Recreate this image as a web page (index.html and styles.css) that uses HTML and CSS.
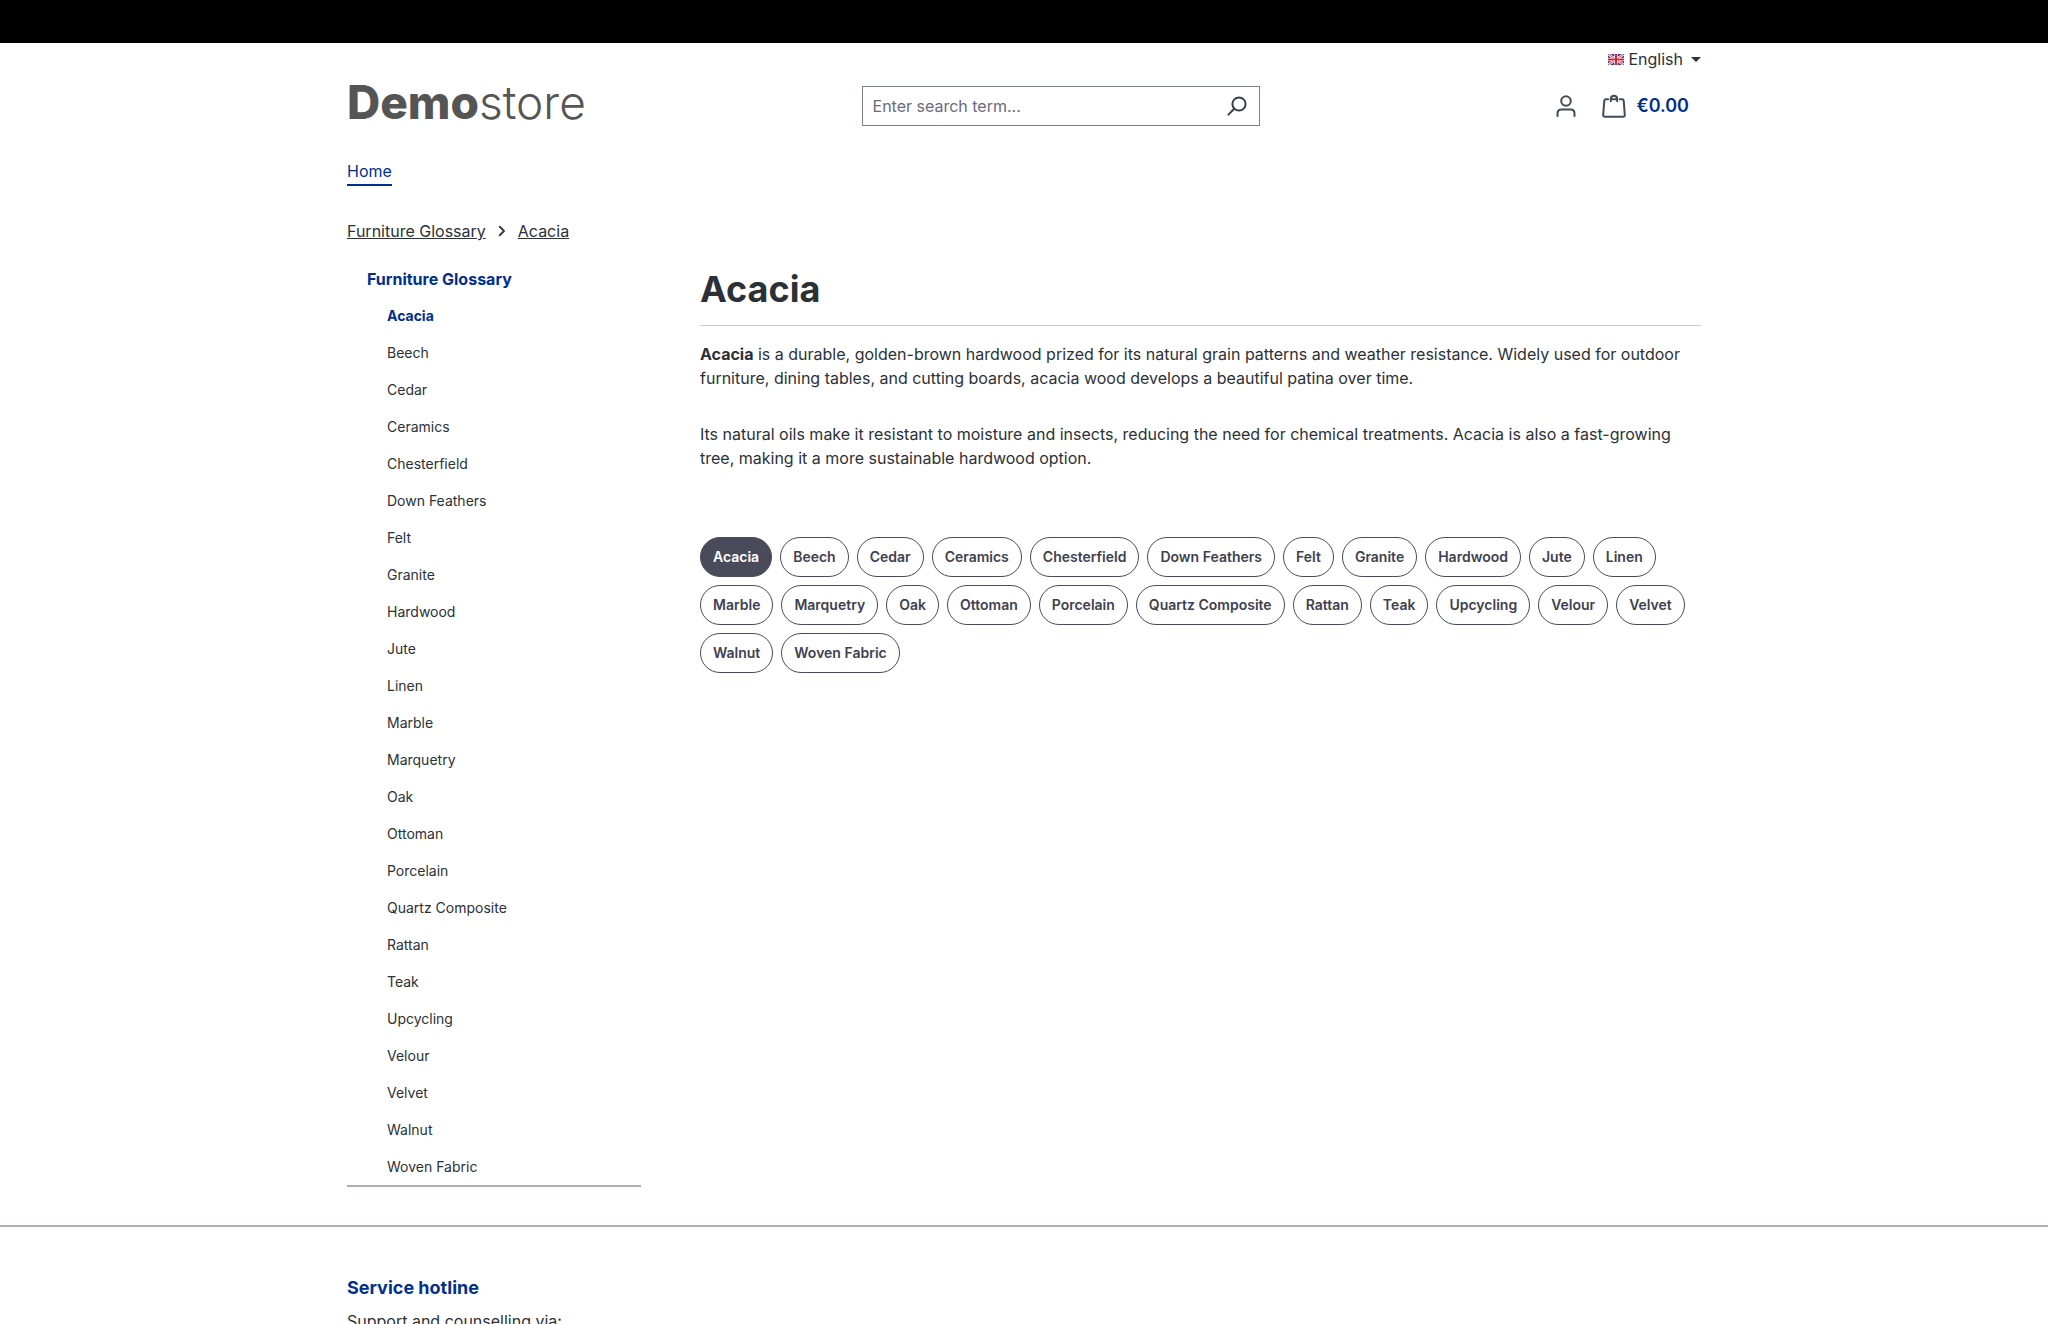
FILE: index.html
```html
<!DOCTYPE html>
<html lang="en">
<head>
    <meta charset="UTF-8">
    <meta name="viewport" content="width=device-width, initial-scale=1.0">
    <title>Acacia | Demostore</title>
    <link rel="stylesheet" href="styles.css">
</head>
<body>
    <div class="admin-bar"></div>
    <header class="container">
        <div class="top-bar">
            <button type="button" class="language-btn">
                <svg class="flag" viewBox="0 0 16 11" aria-hidden="true">
                    <rect width="16" height="11" fill="#2b3c7e"/>
                    <path d="M0 0l16 11M16 0L0 11" stroke="#fff" stroke-width="2.4"/>
                    <path d="M0 0l16 11M16 0L0 11" stroke="#d8213b" stroke-width="0.9"/>
                    <path d="M8 0v11M0 5.5h16" stroke="#fff" stroke-width="3.4"/>
                    <path d="M8 0v11M0 5.5h16" stroke="#d8213b" stroke-width="2"/>
                </svg>
                <span>English</span>
                <span class="caret"></span>
            </button>
        </div>
        <div class="header-row">
            <a href="#" class="logo"><b>Demo</b>store</a>
            <form class="search" role="search">
                <input type="search" class="search-input" placeholder="Enter search term..." aria-label="Enter search term">
                <button type="submit" class="search-btn" aria-label="Search">
                    <svg class="search-icon" viewBox="0 0 20 20" aria-hidden="true">
                        <circle cx="12" cy="8" r="6.6"/>
                        <path d="M7.2 12.8L1.4 18.6"/>
                    </svg>
                </button>
            </form>
            <div class="header-actions">
                <button type="button" class="icon-btn" aria-label="Your account">
                    <svg class="icon" viewBox="0 0 24 24" aria-hidden="true">
                        <circle cx="12" cy="7" r="4.8"/>
                        <path d="M3.5 22v-2.6c0-2.4 1.6-3.9 4-3.9h9c2.4 0 4 1.5 4 3.9V22"/>
                    </svg>
                </button>
                <a href="#" class="cart">
                    <svg class="icon" viewBox="0 0 24 24" aria-hidden="true">
                        <path d="M6.2 5.3H3.9c-.9 0-1.5.5-1.6 1.4L1.2 20.9c-.1 1.1.6 1.8 1.6 1.8h18.4c1 0 1.700-.7 1.600-1.800L21.700 6.700c-.1-.9-.7-1.400-1.600-1.400h-2.300M10.600 5.300h2.800M8.800 7.300V5.200c0-2 1.200-3.500 3.200-3.500s3.200 1.500 3.200 3.500v2.100"/>
                    </svg>
                    <span>€0.00</span>
                </a>
            </div>
        </div>
        <nav class="main-nav">
            <a href="#" class="active">Home</a>
        </nav>
    </header>

    <main class="container">
        <nav class="breadcrumb" aria-label="Breadcrumb">
            <a href="#">Furniture Glossary</a>
            <svg class="chevron" viewBox="0 0 8 12" aria-hidden="true"><path d="M1.800 1.800L6 6l-4.200 4.200"/></svg>
            <a href="#">Acacia</a>
        </nav>
        <div class="content">
            <aside class="sidebar">
                <a href="#" class="sidebar-title">Furniture Glossary</a>
                <ul class="sidebar-list">
                    <li><a href="#" class="active">Acacia</a></li>
                    <li><a href="#">Beech</a></li>
                    <li><a href="#">Cedar</a></li>
                    <li><a href="#">Ceramics</a></li>
                    <li><a href="#">Chesterfield</a></li>
                    <li><a href="#">Down Feathers</a></li>
                    <li><a href="#">Felt</a></li>
                    <li><a href="#">Granite</a></li>
                    <li><a href="#">Hardwood</a></li>
                    <li><a href="#">Jute</a></li>
                    <li><a href="#">Linen</a></li>
                    <li><a href="#">Marble</a></li>
                    <li><a href="#">Marquetry</a></li>
                    <li><a href="#">Oak</a></li>
                    <li><a href="#">Ottoman</a></li>
                    <li><a href="#">Porcelain</a></li>
                    <li><a href="#">Quartz Composite</a></li>
                    <li><a href="#">Rattan</a></li>
                    <li><a href="#">Teak</a></li>
                    <li><a href="#">Upcycling</a></li>
                    <li><a href="#">Velour</a></li>
                    <li><a href="#">Velvet</a></li>
                    <li><a href="#">Walnut</a></li>
                    <li><a href="#">Woven Fabric</a></li>
                </ul>
            </aside>
            <article class="glossary">
                <h1>Acacia</h1>
                <div class="description">
                    <p><strong>Acacia</strong> is a durable, golden-brown hardwood prized for its natural grain patterns and weather resistance. Widely used for outdoor furniture, dining tables, and cutting boards, acacia wood develops a beautiful patina over time.</p>
                    <p>Its natural oils make it resistant to moisture and insects, reducing the need for chemical treatments. Acacia is also a fast-growing tree, making it a more sustainable hardwood option.</p>
                </div>
                <div class="tags">
                    <a href="#" class="tag active">Acacia</a>
                    <a href="#" class="tag">Beech</a>
                    <a href="#" class="tag">Cedar</a>
                    <a href="#" class="tag">Ceramics</a>
                    <a href="#" class="tag">Chesterfield</a>
                    <a href="#" class="tag">Down Feathers</a>
                    <a href="#" class="tag">Felt</a>
                    <a href="#" class="tag">Granite</a>
                    <a href="#" class="tag">Hardwood</a>
                    <a href="#" class="tag">Jute</a>
                    <a href="#" class="tag">Linen</a>
                    <a href="#" class="tag">Marble</a>
                    <a href="#" class="tag">Marquetry</a>
                    <a href="#" class="tag">Oak</a>
                    <a href="#" class="tag">Ottoman</a>
                    <a href="#" class="tag">Porcelain</a>
                    <a href="#" class="tag">Quartz Composite</a>
                    <a href="#" class="tag">Rattan</a>
                    <a href="#" class="tag">Teak</a>
                    <a href="#" class="tag">Upcycling</a>
                    <a href="#" class="tag">Velour</a>
                    <a href="#" class="tag">Velvet</a>
                    <a href="#" class="tag">Walnut</a>
                    <a href="#" class="tag">Woven Fabric</a>
                </div>
            </article>
        </div>
    </main>

    <footer class="footer">
        <div class="container">
            <h2>Service hotline</h2>
            <p>Support and counselling via:</p>
        </div>
    </footer>
</body>
</html>
```

FILE: styles.css
```css
* {
    margin: 0;
    padding: 0;
    box-sizing: border-box;
}

body {
    height: 100vh;
    overflow: hidden;
    font-family: Inter, sans-serif;
    font-size: 16px;
    line-height: 24px;
    color: #2b3136;
    background-color: #fff;
}

a {
    color: inherit;
    text-decoration: none;
}

button {
    font: inherit;
    color: inherit;
    background: none;
    border: none;
    cursor: pointer;
}

.admin-bar {
    height: 43px;
    background-color: #000;
}

.container {
    width: 100%;
    max-width: 1394px;
    margin: 0 auto;
    padding: 0 20px;
}

/* Header */
.top-bar {
    display: flex;
    justify-content: flex-end;
    padding-top: 4px;
}

.language-btn {
    display: flex;
    align-items: center;
    gap: 4px;
}

.flag {
    width: 16px;
    height: 11px;
}

.caret {
    margin-left: 4px;
    border-top: 5px solid #2b3136;
    border-left: 5px solid transparent;
    border-right: 5px solid transparent;
}

.header-row {
    display: grid;
    grid-template-columns: 38% 398px 1fr;
    align-items: center;
    padding-top: 9px;
}

.logo {
    padding-bottom: 8px;
    font-size: 46px;
    line-height: 44px;
    font-weight: 300;
    color: #555;
}

.logo b {
    font-weight: 800;
}

.search {
    display: flex;
    height: 40px;
    border: 1px solid #798490;
}

.search-input {
    flex: 1;
    min-width: 0;
    padding: 0 10px;
    border: none;
    outline: none;
    font: inherit;
    background: none;
}

.search-input::placeholder {
    color: #696a7d;
    opacity: 1;
}

.search-btn {
    display: flex;
    align-items: center;
    padding: 0 12px;
}

.search-icon {
    width: 20px;
    height: 20px;
    fill: none;
    stroke: #35404b;
    stroke-width: 2;
    stroke-linecap: round;
}

.header-actions {
    display: flex;
    justify-content: flex-end;
    align-items: center;
    gap: 24px;
    padding-right: 12px;
}

.icon-btn,
.cart {
    display: flex;
    align-items: center;
}

.cart {
    gap: 10px;
    font-size: 18px;
    font-weight: 600;
    color: #00308c;
}

.icon {
    width: 24px;
    height: 24px;
    fill: none;
    stroke: #424c56;
    stroke-width: 2;
    stroke-linecap: round;
    stroke-linejoin: round;
}

.main-nav {
    display: flex;
    padding-top: 27px;
}

.main-nav .active {
    padding-bottom: 1px;
    border-bottom: 2px solid #00308c;
    color: #00308c;
}

/* Breadcrumb */
.breadcrumb {
    display: flex;
    align-items: center;
    gap: 12px;
    padding: 33px 0 24px;
}

.breadcrumb a {
    text-decoration: underline;
}

.chevron {
    width: 8px;
    height: 12px;
    fill: none;
    stroke: #35404b;
    stroke-width: 2;
    stroke-linecap: round;
    stroke-linejoin: round;
}

/* Content */
.content {
    display: grid;
    grid-template-columns: 294px 1fr;
    align-items: start;
    column-gap: 59px;
}

.sidebar {
    border-bottom: 2px solid #a9b0b9;
}

.sidebar-title {
    display: block;
    padding: 0 20px 6px;
    font-weight: 700;
    color: #00308c;
}

.sidebar-list {
    list-style: none;
}

.sidebar-list a {
    display: block;
    padding: 8px 20px 8px 40px;
    font-size: 14px;
    line-height: 21px;
}

.sidebar-list .active {
    font-weight: 700;
    color: #00308c;
}

.glossary h1 {
    padding-bottom: 14px;
    border-bottom: 1px solid #cbcccf;
    font-size: 36px;
    line-height: 44px;
    font-weight: 700;
}

.description {
    display: grid;
    gap: 32px;
    padding: 16px 0 67px;
}

.tags {
    display: flex;
    flex-wrap: wrap;
    gap: 8px;
}

.tag {
    padding: 8px 12px;
    border: 1px solid #4a4b5a;
    border-radius: 20px;
    font-size: 14px;
    line-height: 22px;
    font-weight: 600;
    color: #404150;
}

.tag.active {
    background-color: #4a4b5a;
    color: #fff;
}

/* Footer */
.footer {
    margin-top: 38px;
    padding: 48px 0;
    border-top: 2px solid #a9b0b9;
}

.footer h2 {
    padding-bottom: 8px;
    font-size: 18px;
    line-height: 26px;
    font-weight: 700;
    color: #00308c;
}
```
